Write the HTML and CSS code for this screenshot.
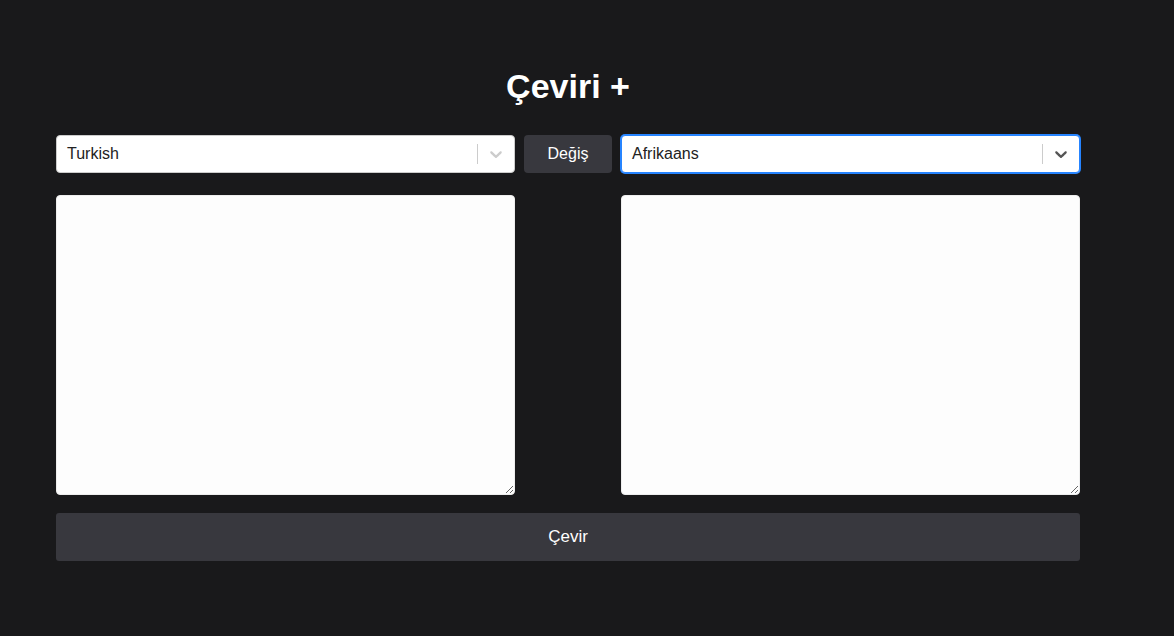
FILE: index.html
```html
<!DOCTYPE html>
<html lang="tr">
<head>
<meta charset="utf-8">
<title>Çeviri +</title>
<link rel="stylesheet" href="styles.css">
</head>
<body>
<main class="app">
  <h1 class="title">Çeviri +</h1>
  <div class="grid">
    <div class="select">
      <span class="select-value">Turkish</span>
      <span class="sep"></span>
      <span class="indicator">
        <svg width="20" height="20" viewBox="0 0 20 20"><path fill="currentColor" d="M4.516 7.548c0.436-0.446 1.043-0.481 1.576 0l3.908 3.747 3.908-3.747c0.533-0.481 1.141-0.446 1.574 0 0.436 0.445 0.408 1.197 0 1.615-0.406 0.418-4.695 4.502-4.695 4.502-0.217 0.223-0.502 0.335-0.787 0.335s-0.57-0.112-0.789-0.335c0 0-4.287-4.084-4.695-4.502s-0.436-1.17 0-1.615z"/></svg>
      </span>
    </div>
    <button class="swap" type="button">Değiş</button>
    <div class="select focused">
      <span class="select-value">Afrikaans</span>
      <span class="sep"></span>
      <span class="indicator">
        <svg width="20" height="20" viewBox="0 0 20 20"><path fill="currentColor" d="M4.516 7.548c0.436-0.446 1.043-0.481 1.576 0l3.908 3.747 3.908-3.747c0.533-0.481 1.141-0.446 1.574 0 0.436 0.445 0.408 1.197 0 1.615-0.406 0.418-4.695 4.502-4.695 4.502-0.217 0.223-0.502 0.335-0.787 0.335s-0.57-0.112-0.789-0.335c0 0-4.287-4.084-4.695-4.502s-0.436-1.170 0-1.615z"/></svg>
      </span>
    </div>
    <textarea class="text left"></textarea>
    <textarea class="text right"></textarea>
    <button class="translate" type="button">Çevir</button>
  </div>
</main>
</body>
</html>
```
FILE: styles.css
```css
html, body {
  margin: 0;
  padding: 0;
  background: #19191b;
  height: 100%;
}
body {
  font-family: "Liberation Sans", Arial, sans-serif;
  color: #ffffff;
}
.app {
  width: 1024px;
  padding: 66px 0 0 56px;
}
.title {
  margin: 0 0 29px 0;
  text-align: center;
  font-size: 34px;
  font-weight: 700;
  line-height: 40px;
}
.grid {
  display: grid;
  grid-template-columns: 459px 88px 459px;
  column-gap: 9px;
  grid-template-rows: auto auto auto;
  row-gap: 0;
}
.select {
  box-sizing: border-box;
  height: 38px;
  background: #ffffff;
  border: 1px solid #cccccc;
  border-radius: 4px;
  display: flex;
  align-items: center;
  color: #222222;
  font-size: 16px;
}
.select.focused {
  border: 1px solid #2684ff;
  box-shadow: 0 0 0 1px #2684ff;
}
.select-value {
  flex: 1;
  padding-left: 10px;
}
.sep {
  width: 1px;
  align-self: stretch;
  margin: 8px 0;
  background: #cccccc;
}
.indicator {
  padding: 8px;
  display: flex;
  color: #cccccc;
}
.focused .indicator {
  color: #555555;
}
.swap {
  box-sizing: border-box;
  height: 38px;
  border: none;
  border-radius: 4px;
  background: #38383e;
  color: #ffffff;
  font-family: "Liberation Sans", Arial, sans-serif;
  font-size: 16px;
  font-weight: 500;
}
.text {
  display: block;
  box-sizing: border-box;
  margin: 22px 0 0 0;
  height: 300px;
  width: 459px;
  background: #fdfdfd;
  border: 1px solid #eeeeee;
  border-radius: 4px;
  resize: vertical;
  font-family: "Liberation Sans", Arial, sans-serif;
  font-size: 16px;
}
.text.left { grid-column: 1; grid-row: 2; }
.text.right { grid-column: 3; grid-row: 2; }
.translate {
  grid-column: 1 / 4;
  grid-row: 3;
  margin-top: 18px;
  height: 48px;
  border: none;
  border-radius: 3px;
  background: #38383e;
  color: #ffffff;
  font-family: "Liberation Sans", Arial, sans-serif;
  font-size: 17px;
}
```
